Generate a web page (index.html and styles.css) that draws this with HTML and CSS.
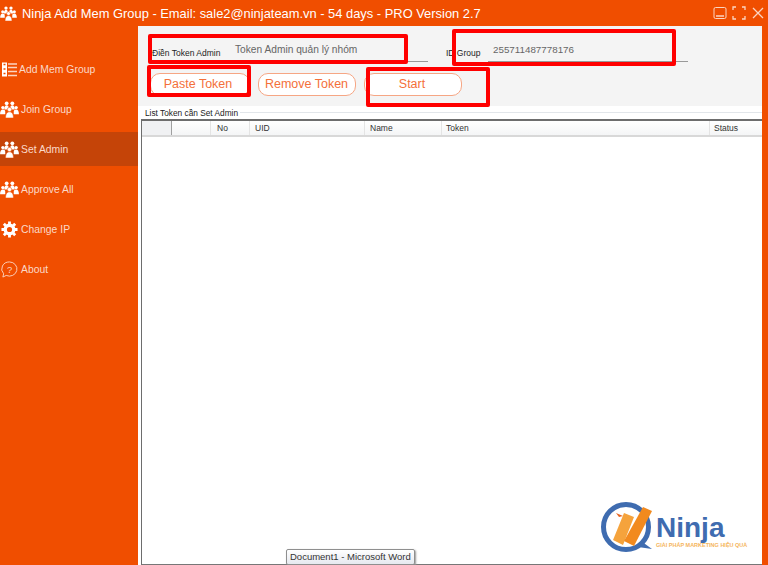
FILE: index.html
```html
<!DOCTYPE html>
<html lang="en">
<head>
    <meta charset="UTF-8">
    <meta name="viewport" content="width=device-width, initial-scale=1.0">
    <title>Ninja Add Mem Group</title>
    <link rel="stylesheet" href="styles.css">
</head>
<body>
    <svg width="0" height="0" class="defs">
        <symbol id="people" viewBox="0 0 20 18">
            <g fill="#fff">
                <circle cx="7" cy="2.500" r="2"/><circle cx="13" cy="2.500" r="2"/>
                <path d="M4.500 9c0-3 1-4.500 2.500-4.500S9.500 6 9.500 9zM10.500 9c0-3 1-4.500 2.500-4.500S15.500 6 15.500 9z"/>
                <circle cx="3" cy="7" r="1.800"/><circle cx="17" cy="7" r="1.800"/>
                <path d="M0 14c0-3 1-5 3-5s2.500 1 2.500 2.500V14zM20 14c0-3-1-5-3-5s-2.500 1-2.500 2.500V14z"/>
                <circle cx="10" cy="9" r="2.300" stroke="#f04e00" stroke-width=".6"/>
                <path d="M5.800 18c0-4 1.500-6.500 4.200-6.500s4.200 2.500 4.200 6.500z" stroke="#f04e00" stroke-width=".6"/>
            </g>
        </symbol>
    </svg>

    <header class="titlebar">
        <svg class="title-icon"><use href="#people"/></svg>
        <span class="title-text">Ninja Add Mem Group - Email: sale2@ninjateam.vn - 54 days - PRO Version 2.7</span>
        <div class="win-btns">
            <svg width="14" height="14" viewBox="0 0 14 14" fill="none" stroke="#fbd5c2"><rect x="1" y="1.500" width="12" height="11" rx="1.500"/><path d="M3 10h8" stroke-width="1.500"/></svg>
            <svg width="14" height="14" viewBox="0 0 14 14" fill="none" stroke="#fbd5c2" stroke-width="1.300"><path d="M1 4V1h3M10 1h3v3M13 10v3h-3M4 13H1v-3"/></svg>
            <svg width="14" height="14" viewBox="0 0 14 14" fill="none" stroke="#fbd5c2" stroke-width="1.300"><path d="M2 2l10 10M12 2L2 12"/></svg>
        </div>
    </header>

    <div class="app">
        <nav class="sidebar">
            <a class="nav-item">
                <svg class="nav-icon nav-icon-list" viewBox="0 0 17 16">
                    <rect x="2" y="1" width="5" height="14" fill="#fff"/>
                    <path d="M3.500 3h2M3.500 7.500h2M3.500 12h2" stroke="#f04e00" stroke-width="1.500"/>
                    <path d="M8 2.500H17M8 6H17M8 10H17M8 14H17" stroke="#fbd5c2" stroke-width="1.300"/>
                </svg>
                <span>Add Mem Group</span>
            </a>
            <a class="nav-item">
                <svg class="nav-icon"><use href="#people"/></svg>
                <span>Join Group</span>
            </a>
            <a class="nav-item active">
                <svg class="nav-icon"><use href="#people"/></svg>
                <span>Set Admin</span>
            </a>
            <a class="nav-item">
                <svg class="nav-icon"><use href="#people"/></svg>
                <span>Approve All</span>
            </a>
            <a class="nav-item">
                <svg class="nav-icon" viewBox="0 0 18 18">
                    <circle cx="9" cy="9" r="4.500" fill="none" stroke="#fff" stroke-width="3.500"/>
                    <path d="M9 .5v4M9 13.500v4M.5 9h4M13.500 9h4M3 3l2.800 2.800M12.200 12.200L15 15M15 3l-2.800 2.800M5.800 12.200L3 15" stroke="#fff" stroke-width="3"/>
                </svg>
                <span>Change IP</span>
            </a>
            <a class="nav-item">
                <svg class="nav-icon" viewBox="0 0 18 18" fill="none" stroke="#fbd5c2">
                    <path d="M9 1a8 7.500 0 1 1-3.500 14.300L2 17l.8-3.500A8 7.500 0 0 1 9 1z"/>
                    <text x="9" y="12.500" text-anchor="middle" class="about-mark">?</text>
                </svg>
                <span>About</span>
            </a>
        </nav>

        <main class="content">
            <section class="top-panel">
                <div class="field-row">
                    <label class="field-label label-token">Điền Token Admin</label>
                    <div class="field field-token">Token Admin quản lý nhóm</div>
                    <label class="field-label label-id">ID Group</label>
                    <div class="field field-id">255711487778176</div>
                </div>
                <div class="btn-row">
                    <button class="btn btn-paste">Paste Token</button>
                    <button class="btn btn-remove">Remove Token</button>
                    <button class="btn btn-start">Start</button>
                </div>
            </section>

            <section class="list-box">
                <div class="list-title"><span>List Token cần Set Admin</span></div>
                <div class="grid-wrap">
                    <div class="grid-head">
                        <div class="col-corner"></div>
                        <div class="col-check"></div>
                        <div class="col-no">No</div>
                        <div class="col-uid">UID</div>
                        <div class="col-name">Name</div>
                        <div class="col-token">Token</div>
                        <div class="col-status">Status</div>
                    </div>
                </div>
            </section>
        </main>
    </div>

    <!-- red marks drawn on top of the screenshot -->
    <div class="mark mark-token"></div>
    <div class="mark mark-id"></div>
    <div class="mark mark-paste"></div>
    <div class="mark mark-start"></div>

    <div class="logo">
        <svg width="56" height="54" viewBox="0 0 56 54">
            <circle cx="26" cy="26" r="22.500" fill="#fff" stroke="#3f6cb0" stroke-width="5"/>
            <path d="M41 40l11 8-14-2z" fill="#3f6cb0"/>
            <path d="M16 12l7 3-4 1z" fill="#e8641e"/>
            <path d="M24 12l10 4-11 28-10-5z" fill="#f5a33c"/>
            <path d="M43 6l9 4-18 35-10-5z" fill="#f28a1e"/>
        </svg>
        <div class="logo-text">
            <div class="logo-name">Ninja</div>
            <div class="logo-sub">GIẢI PHÁP MARKETING HIỆU QUẢ</div>
        </div>
    </div>

    <div class="tooltip">Document1 - Microsoft Word</div>
</body>
</html>
```

FILE: styles.css
```css
html, body {
    margin: 0;
    height: 100%;
}
body {
    position: relative;
    width: 768px;
    height: 565px;
    overflow: hidden;
    display: flex;
    flex-direction: column;
    background: #f04e00;
    font-family: "Liberation Sans", Arial, sans-serif;
}
.defs {
    display: block;
    height: 0;
}
.titlebar {
    height: 26px;
    flex: none;
    display: flex;
    align-items: center;
    color: #fff;
}
.title-icon {
    width: 17px;
    height: 15px;
    margin-right: 5px;
}
.title-text {
    font-size: 12.900px;
    color: #fff;
    white-space: nowrap;
}
.win-btns {
    margin-left: auto;
    margin-right: 3px;
    display: flex;
    gap: 5px;
}
.app {
    flex: 1;
    display: flex;
    min-height: 0;
}
.sidebar {
    width: 138px;
    flex: none;
    padding-top: 26px;
}
.nav-item {
    height: 34px;
    margin-bottom: 6px;
    display: flex;
    align-items: center;
    color: #fbd9c8;
    font-size: 10.400px;
}
.nav-item.active {
    background: #c54408;
}
.nav-icon {
    width: 19px;
    height: 17px;
    margin-right: 2px;
    flex: none;
}
.nav-icon-list {
    width: 17px;
}
.about-mark {
    font-size: 10px;
    font-family: "Liberation Sans", Arial, sans-serif;
    fill: #fbd5c2;
    stroke: none;
}
.content {
    width: 624px;
    flex: none;
    background: #fff;
    display: flex;
    flex-direction: column;
}
.top-panel {
    height: 80px;
    flex: none;
    background: #f4f4f4;
    box-sizing: border-box;
    padding-left: 12px;
}
.field-row {
    height: 36px;
    display: flex;
    align-items: flex-end;
}
.field-label {
    font-size: 8.500px;
    color: #222;
    padding-bottom: 4px;
    white-space: nowrap;
}
.label-token {
    width: 83px;
    margin-left: 2px;
}
.label-id {
    width: 42px;
    margin-left: 18px;
}
.field {
    height: 26px;
    box-sizing: border-box;
    border-bottom: 1px solid #999;
    color: #666;
    padding-top: 8px;
    white-space: nowrap;
}
.field-token {
    width: 193px;
    font-size: 10.200px;
}
.field-id {
    width: 200px;
    font-size: 9.800px;
    padding-left: 5px;
}
.btn-row {
    display: flex;
    gap: 8px;
    margin-top: 11px;
}
.btn {
    height: 23px;
    box-sizing: border-box;
    background: #fff;
    border: 1px solid #f6a684;
    border-radius: 10px;
    color: #f4703a;
    font-family: inherit;
    font-size: 12.500px;
    padding: 0 4px 1px 0;
}
.btn-paste {
    width: 100px;
}
.btn-remove {
    width: 98px;
    padding-right: 1px;
}
.btn-start {
    width: 98px;
    padding-right: 2px;
}
.list-box {
    flex: 1;
    display: flex;
    flex-direction: column;
    min-height: 0;
}
.list-title {
    height: 13px;
    font-size: 8.300px;
    color: #222;
    padding-left: 7px;
    display: flex;
    align-items: center;
    gap: 2px;
}
.list-title::after {
    content: "";
    flex: 1;
    height: 1px;
    background: #e2e6ea;
}
.grid-wrap {
    flex: 1;
    margin-left: 3px;
    border-top: 2px solid #6d6d6d;
    border-left: 1px solid #6d6d6d;
    border-bottom: 1px solid #777;
    background: #fff;
}
.grid-head {
    height: 14px;
    display: flex;
    align-items: center;
    font-size: 8.500px;
    color: #333;
    background: linear-gradient(#fff, #f4f5f6);
    border-bottom: 2px solid #d8d8d8;
}
.grid-head > div {
    height: 100%;
    display: flex;
    align-items: center;
    box-sizing: border-box;
    border-right: 1px solid #e4e4e4;
    padding-left: 4px;
}
.grid-head > .col-corner {
    width: 30px;
    background: #f0f1f3;
    border-right-color: #a0a0a0;
}
.grid-head > .col-check {
    width: 39px;
}
.grid-head > .col-no {
    width: 39px;
    padding-left: 6px;
}
.grid-head > .col-uid {
    width: 115px;
    padding-left: 5px;
}
.grid-head > .col-name {
    width: 77px;
    padding-left: 5px;
}
.grid-head > .col-token {
    width: 268px;
    padding-left: 4px;
}
.grid-head > .col-status {
    flex: 1;
    border-right: 0;
}
.mark {
    position: absolute;
    box-sizing: border-box;
    border: 4px solid #f00;
    border-radius: 2px;
}
.mark-token {
    left: 148px;
    top: 34px;
    width: 260px;
    height: 30px;
}
.mark-id {
    left: 452px;
    top: 29px;
    width: 224px;
    height: 37px;
}
.mark-paste {
    left: 147px;
    top: 65px;
    width: 104px;
    height: 32px;
}
.mark-start {
    left: 366px;
    top: 67px;
    width: 124px;
    height: 40px;
}
.logo {
    position: absolute;
    left: 600px;
    top: 501px;
    display: flex;
    align-items: center;
}
.logo-text {
    margin-top: 5px;
}
.logo-name {
    font-size: 28px;
    line-height: 29px;
    font-weight: bold;
    color: #3f6cb0;
}
.logo-sub {
    font-size: 5.500px;
    color: #f5b55c;
    font-weight: bold;
    white-space: nowrap;
}
.tooltip {
    position: absolute;
    left: 286px;
    top: 549px;
    height: 16px;
    box-sizing: border-box;
    padding: 1px 3px;
    font-size: 9.500px;
    color: #333;
    background: linear-gradient(#fff, #e6e9ef);
    border: 1px solid #8f8f8f;
    border-radius: 2px;
    box-shadow: 1px 1px 2px #999;
    white-space: nowrap;
}
```
